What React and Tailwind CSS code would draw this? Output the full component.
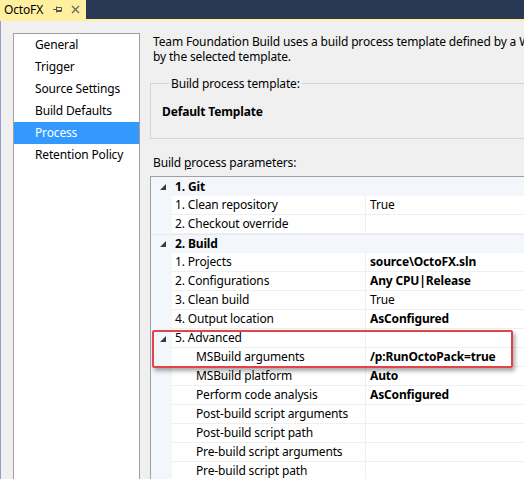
import React from 'react';

const navItems = ['General', 'Trigger', 'Source Settings', 'Build Defaults', 'Process', 'Retention Policy'];

const groups = [
  {
    title: '1. Git',
    rows: [
      { name: '1. Clean repository', value: 'True' },
      { name: '2. Checkout override', value: '' },
    ],
  },
  {
    title: '2. Build',
    rows: [
      { name: '1. Projects', value: 'source\\OctoFX.sln', bold: true },
      { name: '2. Configurations', value: 'Any CPU|Release', bold: true },
      { name: '3. Clean build', value: 'True' },
      { name: '4. Output location', value: 'AsConfigured', bold: true },
    ],
  },
];

const advanced = [
  { name: 'MSBuild arguments', value: '/p:RunOctoPack=true', bold: true },
  { name: 'MSBuild platform', value: 'Auto', bold: true },
  { name: 'Perform code analysis', value: 'AsConfigured', bold: true },
  { name: 'Post-build script arguments', value: '' },
  { name: 'Post-build script path', value: '' },
  { name: 'Pre-build script arguments', value: '' },
  { name: 'Pre-build script path', value: '' },
];

function Expander() {
  return (
    <svg width="6" height="6" viewBox="0 0 6 6" className="block">
      <polygon points="6,0 6,6 0,6" fill="#3c3c3c" />
    </svg>
  );
}

function DataRow({ name, value, bold, indent }) {
  return (
    <div className="flex h-[19px]">
      <div className="w-[21px] shrink-0 bg-[#f3f6fb]" />
      <div className={`w-[194px] shrink-0 bg-white border-b border-r border-[#f0f0f0] flex items-center ${indent ? 'pl-[24px]' : 'pl-[3px]'}`}>
        {name}
      </div>
      <div className={`flex-1 bg-white border-b border-[#f0f0f0] flex items-center pl-[4px] ${bold ? 'font-bold' : ''}`}>
        {value}
      </div>
    </div>
  );
}

function GroupHeader({ title, first }) {
  return (
    <div className={`flex h-[19px] bg-[#f3f6fb] ${first ? '' : 'border-t border-[#e6e9ee]'}`}>
      <div className="w-[21px] shrink-0 flex items-center justify-center pl-[2px]">
        <Expander />
      </div>
      <div className="flex items-center pl-[3px] font-bold">{title}</div>
    </div>
  );
}

export default function App() {
  return (
    <div
      className="w-[524px] h-[479px] overflow-hidden bg-[#f0f0f0] flex flex-col text-[12px] tracking-[-0.15px] text-black"
      style={{ fontFamily: '"Noto Sans", "Open Sans", sans-serif' }}
    >
      {/* Document tab strip */}
      <div className="h-[19px] shrink-0 bg-[#293955] flex">
        <div className="w-[86px] bg-[#ffef9f] flex items-center pl-[4px] text-[12px]">
          <span>OctoFX</span>
          <svg width="9" height="9" viewBox="0 0 9 9" className="ml-[10px]">
            <path d="M0 4.5H3M3.5 1.5V7.5M3.5 2.5H8.5V6.5H3.5" stroke="#555" fill="none" />
            <path d="M4 5.5H8" stroke="#555" />
          </svg>
          <svg width="9" height="9" viewBox="0 0 9 9" className="ml-[9px]">
            <path d="M1 1L8 8M8 1L1 8" stroke="#6b6b6b" strokeWidth="1.4" />
          </svg>
        </div>
      </div>
      <div className="h-[2px] shrink-0 bg-[#ffef9f]" />

      <div className="flex-1 min-h-0 flex border-l border-[#8c9ec9] pl-[12px] pt-[12px]">
        {/* Left navigation */}
        <div className="w-[127px] shrink-0 bg-white border-x border-t border-[#a0a0a0]">
          {navItems.map((item) => (
            <div
              key={item}
              className={`h-[22px] flex items-center pl-[21px] ${item === 'Process' ? 'bg-[#3399ff] text-white' : ''}`}
            >
              {item}
            </div>
          ))}
        </div>

        {/* Content */}
        <div className="flex-1 min-w-0 ml-[10px] flex flex-col overflow-hidden">
          <p className="mt-[1px] pl-[3px] leading-[15px] whitespace-nowrap">
            Team Foundation Build uses a build process template defined by a Windows Workflow (XAML) file.
            <br />
            by the selected template.
          </p>

          <fieldset className="mt-[12px] w-[420px] border border-[#d5d5d5] pl-[11px] pt-[13px] pb-[19px]">
            <legend className="ml-[7px] px-[2px] leading-[15px]">Build process template:</legend>
            <div className="font-bold leading-[15px]">Default Template</div>
          </fieldset>

          <div className="mt-[16px] pl-[3px] leading-[15px]">
            Build <span className="underline">p</span>rocess parameters:
          </div>

          <div className="relative mt-[6px] w-[420px] border-t border-l border-[#a0a0a0]">
            {groups.map((g, gi) => (
              <div key={g.title}>
                <GroupHeader title={g.title} first={gi === 0} />
                {g.rows.map((r) => (
                  <DataRow key={r.name} {...r} />
                ))}
              </div>
            ))}
            <div className="flex h-[19px]">
              <div className="w-[21px] shrink-0 bg-[#f3f6fb] flex items-center justify-center pl-[2px]">
                <Expander />
              </div>
              <div className="w-[194px] shrink-0 bg-white border-b border-r border-[#f0f0f0] flex items-center pl-[3px]">
                5. Advanced
              </div>
              <div className="flex-1 bg-white border-b border-[#f0f0f0]" />
            </div>
            {advanced.map((r) => (
              <DataRow key={r.name} {...r} indent />
            ))}

            {/* Highlight callout */}
            <div className="absolute left-[1px] top-[153px] w-[361px] h-[38px] border-2 border-[#e2434a] rounded-[2px] shadow-[2px_3px_4px_rgba(0,0,0,0.35)]" />
          </div>
        </div>
      </div>
    </div>
  );
}
